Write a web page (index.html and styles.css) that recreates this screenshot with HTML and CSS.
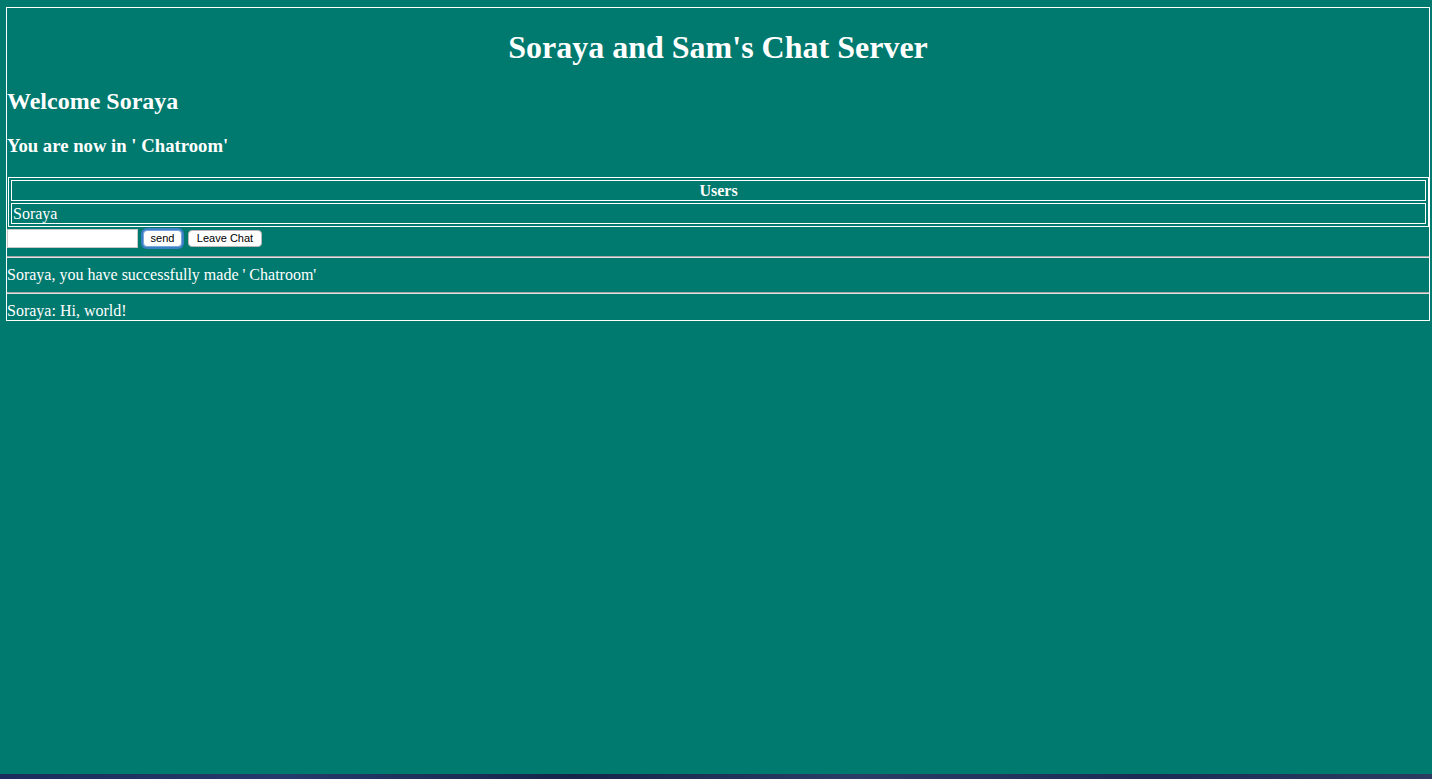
FILE: index.html
```html
<!DOCTYPE html>
<html>
<head>
<meta charset="utf-8">
<title>Chat Server</title>
<link rel="stylesheet" href="styles.css">
</head>
<body>
<div class="screen">
  <div class="chat">
    <h1 class="title">Soraya and Sam's Chat Server</h1>
    <h2 class="welcome">Welcome Soraya</h2>
    <h3 class="room">You are now in ' Chatroom'</h3>
    <table class="users">
      <tr><th class="cell head">Users</th></tr>
      <tr><td class="cell">Soraya</td></tr>
    </table>
    <form class="composer">
      <input class="msg-input" type="text">
      <button class="btn btn-focus" type="button">send</button>
      <button class="btn btn-leave" type="button">Leave Chat</button>
    </form>
    <hr class="sep">
    <div class="message">Soraya, you have successfully made ' Chatroom'</div>
    <hr class="sep">
    <div class="message">Soraya: Hi, world!</div>
  </div>
</div>
<div class="desktop"></div>
</body>
</html>
```
FILE: styles.css
```css
html, body {
  margin: 0;
  padding: 0;
  height: 100%;
  overflow: hidden;
}
body {
  background: #17264a;
  font-family: "Liberation Serif", "Times New Roman", serif;
  font-size: 16px;
  color: #ffffff;
}
.screen {
  height: 774px;
  background: #00796e;
  padding: 7px 2px 0 6px;
  box-sizing: border-box;
}
.desktop {
  height: 5px;
  background: linear-gradient(90deg, #1a2d5c 0%, #243a6a 20%, #16244a 40%, #2a3d66 60%, #1b2b55 80%, #2c3b60 100%);
}
.chat {
  border: 1px solid #ffffff;
}
.title {
  font-size: 32px;
  font-weight: bold;
  text-align: center;
  margin: 21px 0;
}
.welcome {
  font-size: 24px;
  font-weight: bold;
  margin: 22px 0 20px;
}
.room {
  font-size: 18.72px;
  font-weight: bold;
  margin: 20px 0 20px;
}
.users {
  width: calc(100% - 1px);
  margin-left: 1px;
  border: 1px solid #ffffff;
  border-spacing: 2px;
}
.cell {
  border: 1px solid #ffffff;
  padding: 1px;
  text-align: left;
  font-weight: normal;
  line-height: 17px;
}
.cell.head {
  text-align: center;
  font-weight: bold;
}
.composer {
  display: flex;
  align-items: center;
  gap: 5px;
  margin: 0;
  padding: 2px 0 0 0;
}
.msg-input {
  width: 131px;
  height: 19px;
  box-sizing: border-box;
  border: 1px solid #c8c8c8;
  background: #ffffff;
  margin: 0;
  padding: 0 2px;
}
.btn {
  height: 17px;
  box-sizing: border-box;
  border: 1px solid #b8b8b8;
  border-radius: 4px;
  background: #ffffff;
  color: #000000;
  font-family: "Liberation Sans", Arial, sans-serif;
  font-size: 11px;
  line-height: 13px;
  padding: 0 6px;
  margin: 0;
}
.btn-focus {
  width: 39px;
  box-shadow: 0 0 0 2px #3b7fc4;
  border-color: #7aa7d9;
}
.btn-leave {
  width: 74px;
  margin-left: 1px;
}
.sep {
  margin: 8px 0;
  border: 0;
  border-top: 1px solid #a6a6a6;
  border-bottom: 1px solid #e0e0e0;
  height: 0;
}
.message {
  line-height: 18px;
}
```
